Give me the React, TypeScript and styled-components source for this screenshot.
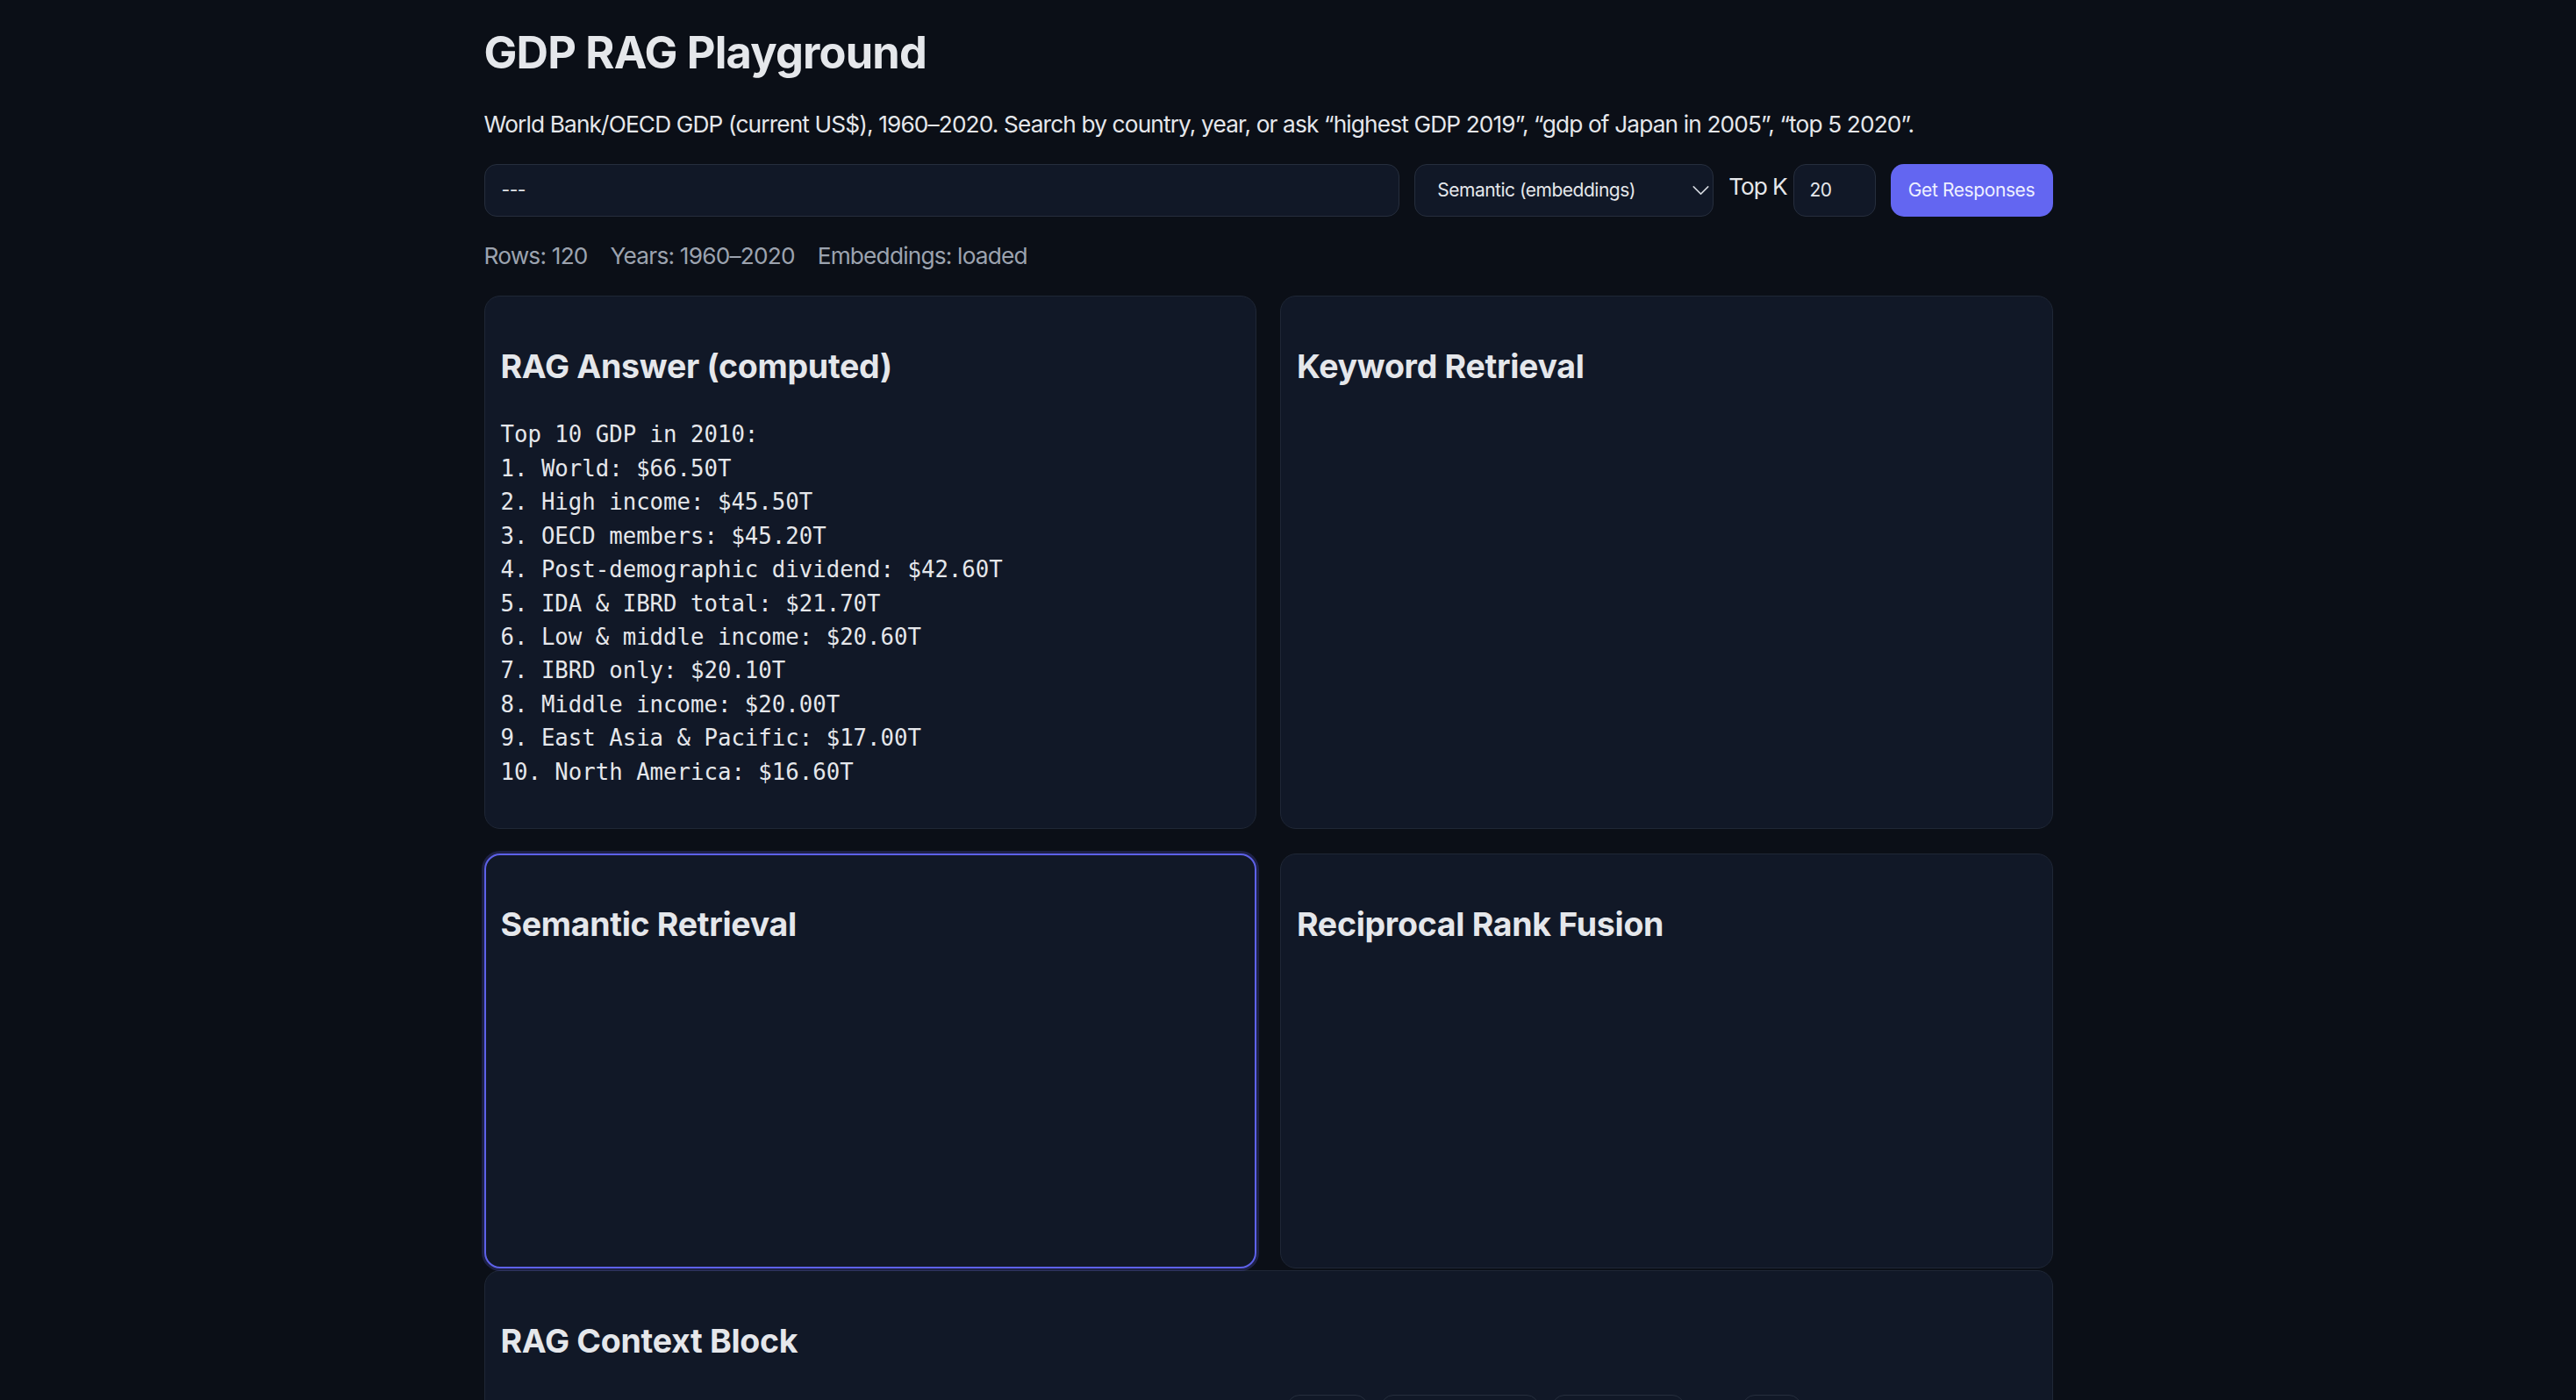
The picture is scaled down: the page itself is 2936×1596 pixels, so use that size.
import React from "react";
import styled, { createGlobalStyle, css } from "styled-components";
import { ChevronDown } from "lucide-react";

const GlobalStyle = createGlobalStyle`
  *, *::before, *::after { box-sizing: border-box; }
  html, body { margin: 0; padding: 0; background: #0b0f17; }
  body {
    font-family: Inter, "Noto Sans", "Liberation Sans", sans-serif;
    color: #e5e7eb;
  }
`;

const Page = styled.div`
  padding: 29px 45px 0 0;
  min-height: 100vh;
  background: #0b0f17;
`;

const Container = styled.main`
  max-width: 1788px;
  margin: 0 auto;
`;

const Title = styled.h1`
  margin: 0;
  font-size: 50.5px;
  font-weight: 700;
  line-height: 1.21;
  letter-spacing: -0.8px;
  color: #e5e7eb;
`;

const Description = styled.p`
  margin: 36px 0 0;
  font-size: 26.25px;
  line-height: 1.21;
  letter-spacing: -0.86px;
  color: #e5e7eb;
`;

const Controls = styled.div`
  display: flex;
  align-items: center;
  gap: 17px;
  margin-top: 29px;
  height: 60px;
`;

const fieldBase = css`
  height: 60px;
  background: #111827;
  border: 1.5px solid #262e3d;
  border-radius: 14px;
  color: #e5e7eb;
  font-family: Inter, "Noto Sans", "Liberation Sans", sans-serif;
  font-size: 21px;
  letter-spacing: -0.5px;
  outline: none;
`;

const QueryInput = styled.input`
  ${fieldBase};
  flex: 1;
  min-width: 0;
  padding: 0 19px;
`;

const SelectWrap = styled.div`
  position: relative;
  width: 341px;
  flex: none;
`;

const ModeSelect = styled.select`
  ${fieldBase};
  width: 100%;
  appearance: none;
  -webkit-appearance: none;
  padding: 0 48px 0 25px;
`;

const Chevron = styled.span`
  position: absolute;
  right: -2px;
  top: 50%;
  transform: translateY(-50%);
  display: flex;
  color: #d1d5db;
  pointer-events: none;
`;

const TopKGroup = styled.label`
  display: flex;
  align-items: center;
  gap: 7px;
  flex: none;
`;

const TopKLabel = styled.span`
  font-size: 26.25px;
  letter-spacing: -1.1px;
  color: #e5e7eb;
  margin-top: -8px;
`;

const NumberInput = styled.input`
  ${fieldBase};
  width: 94px;
  padding: 0 18px;
`;

const PrimaryButton = styled.button`
  height: 60px;
  width: 185px;
  flex: none;
  border: none;
  border-radius: 15px;
  background: #6366f1;
  color: #eef0ff;
  font-family: Inter, "Noto Sans", "Liberation Sans", sans-serif;
  font-size: 21px;
  letter-spacing: -0.4px;
  cursor: pointer;
`;

const Stats = styled.div`
  display: flex;
  gap: 26px;
  margin-top: 29.5px;
  font-size: 26.25px;
  line-height: 1.21;
  letter-spacing: -0.8px;
  color: #9ca3af;
`;

const CardGrid = styled.section`
  display: grid;
  grid-template-columns: 1fr 1fr;
  column-gap: 27px;
  row-gap: 28px;
  margin-top: 28.5px;
`;

const Card = styled.section<{ $focused?: boolean }>`
  min-height: 473px;
  padding: 18px 18px 45px;
  background: #111827;
  border: 1.5px solid #1f2736;
  border-radius: 18px;
  ${(p) =>
    p.$focused &&
    css`
      border: 2.5px solid #5d61e8;
      padding: 17px 17px 44px;
      box-shadow: 0 0 0 3px rgba(99, 102, 241, 0.22);
    `}
`;

const ContextCard = styled(Card)`
  margin-top: 2px;
  min-height: 400px;
`;

const CardTitle = styled.h2`
  margin: 39px 0 0;
  font-size: 37.5px;
  font-weight: 700;
  line-height: 1.21;
  letter-spacing: -0.3px;
  color: #e5e7eb;
`;

const AnswerText = styled.pre`
  margin: 36.5px 0 0;
  font-family: "DejaVu Sans Mono", "Liberation Mono", monospace;
  font-size: 25.7px;
  line-height: 38.4px;
  color: #e5e7eb;
  white-space: pre-wrap;
`;

const ContextLayout = styled.div`
  display: grid;
  grid-template-columns: 1fr 1fr;
  align-items: start;
  column-gap: 28px;
  margin-top: 38.5px;
`;

const ContextBody = styled.div`
  min-height: 90px;
`;

const ContextToolbar = styled.div`
  display: flex;
  align-items: center;
  gap: 15px;
  padding-left: 7px;
`;

const ToolButton = styled.button`
  height: 90px;
  padding: 0 20px;
  background: transparent;
  border: 1.5px solid #262e3d;
  border-radius: 14px;
  color: #e5e7eb;
  font-family: Inter, "Noto Sans", "Liberation Sans", sans-serif;
  font-size: 21px;
  letter-spacing: -0.5px;
`;

const ToolLabel = styled.span`
  font-size: 21px;
  color: #9ca3af;
  margin: 0 8px;
`;

const answer = `Top 10 GDP in 2010:
1. World: $66.50T
2. High income: $45.50T
3. OECD members: $45.20T
4. Post-demographic dividend: $42.60T
5. IDA & IBRD total: $21.70T
6. Low & middle income: $20.60T
7. IBRD only: $20.10T
8. Middle income: $20.00T
9. East Asia & Pacific: $17.00T
10. North America: $16.60T`;

export default function App() {
  return (
    <>
      <GlobalStyle />
      <Page>
        <Container>
          <Title>GDP RAG Playground</Title>
          <Description>
            World Bank/OECD GDP (current US$), 1960–2020. Search by country, year, or ask “highest GDP
            2019”, “gdp of Japan in 2005”, “top 5 2020”.
          </Description>

          <Controls>
            <QueryInput defaultValue="---" aria-label="Query" />
            <SelectWrap>
              <ModeSelect defaultValue="semantic" aria-label="Retrieval mode">
                <option value="keyword">Keyword (BM25)</option>
                <option value="semantic">Semantic (embeddings)</option>
                <option value="rrf">Hybrid (RRF)</option>
              </ModeSelect>
              <Chevron>
                <ChevronDown size={33} strokeWidth={1.1} />
              </Chevron>
            </SelectWrap>
            <TopKGroup>
              <TopKLabel>Top K</TopKLabel>
              <NumberInput type="text" defaultValue="20" aria-label="Top K" />
            </TopKGroup>
            <PrimaryButton>Get Responses</PrimaryButton>
          </Controls>

          <Stats>
            <span>Rows: 120</span>
            <span>Years: 1960–2020</span>
            <span>Embeddings: loaded</span>
          </Stats>

          <CardGrid>
            <Card>
              <CardTitle>RAG Answer (computed)</CardTitle>
              <AnswerText>{answer}</AnswerText>
            </Card>
            <Card>
              <CardTitle>Keyword Retrieval</CardTitle>
            </Card>
            <Card $focused>
              <CardTitle>Semantic Retrieval</CardTitle>
            </Card>
            <Card>
              <CardTitle>Reciprocal Rank Fusion</CardTitle>
            </Card>
          </CardGrid>

          <ContextCard>
            <CardTitle>RAG Context Block</CardTitle>
            <ContextLayout>
              <ContextBody />
              <ContextToolbar>
                <ToolButton>Copy</ToolButton>
                <ToolButton>Copy as JSON</ToolButton>
                <ToolButton>Export CSV</ToolButton>
                <ToolLabel>of</ToolLabel>
                <ToolButton>20</ToolButton>
              </ContextToolbar>
            </ContextLayout>
          </ContextCard>
        </Container>
      </Page>
    </>
  );
}
